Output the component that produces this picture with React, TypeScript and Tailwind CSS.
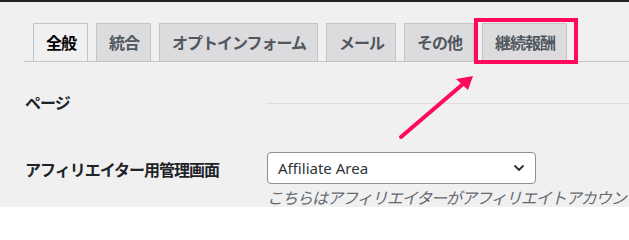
import React from "react";

const tabs = ["全般", "統合", "オプトインフォーム", "メール", "その他", "継続報酬"];

export default function App() {
  return (
    <div
      className="relative w-[629px] h-[207px] overflow-hidden bg-[#f0f0f1]"
      style={{ fontFamily: '"Noto Sans", "Noto Sans CJK JP", sans-serif' }}
    >
      <div className="h-[2px] bg-[#1d2327]" />
      <div className="ml-[24px] pt-[21px] pl-[9px] flex gap-[8px] border-b border-[#c3c4c7]">
        {tabs.map((t, i) => (
          <div
            key={t}
            className={
              i === 0
                ? "h-[38px] -mb-px pl-[12px] pr-[11px] flex items-center border border-b-0 border-[#c3c4c7] bg-[#f0f0f1] text-[16px] tracking-[-1px] font-bold text-[#000] leading-none"
                : "h-[38px] pl-[12px] pr-[11px] flex items-center border border-b-0 border-[#c3c4c7] bg-[#dcdcde] text-[16px] tracking-[-1px] font-bold text-[#50575e] leading-none"
            }
          >
            {t}
          </div>
        ))}
      </div>

      <div className="pl-[25px]">
        <div className="mt-[29px] h-[24px] flex items-center">
          <div className="w-[241px] text-[16px] tracking-[-1px] font-bold text-[#1d2327]">ページ</div>
          <div className="flex-1 h-px bg-[#dcdcde]" />
        </div>
        <div className="mt-[37px] flex items-center">
          <div className="w-[242px] pt-[3px] text-[16px] tracking-[-1px] font-bold text-[#1d2327]">アフィリエイター用管理画面</div>
          <div className="w-[269px] h-[32px] flex items-center justify-between pl-[10px] pr-[11px] border border-[#8c8f94] rounded-[4px] bg-white text-[15px] text-[#2c3338]">
            <span>Affiliate Area</span>
            <svg width="10" height="6" viewBox="0 0 10 6" fill="none">
              <path d="M1 1l4 4 4-4" stroke="#2c3338" strokeWidth="1.8" strokeLinecap="round" strokeLinejoin="round" />
            </svg>
          </div>
        </div>
        <div className="ml-[242px] mt-[2px] whitespace-nowrap text-[16px] tracking-[-1px] italic text-[#646970]">
          こちらはアフィリエイターがアフィリエイトアカウントを管理するページです。
        </div>
      </div>

      <div className="absolute left-[474px] top-[18px] w-[104px] h-[46px] border-[4px] border-[#ff0a5a]" />
      <svg className="absolute left-0 top-0" width="629" height="207" viewBox="0 0 629 207">
        <line x1="401" y1="137" x2="463" y2="84" stroke="#ff0a5a" strokeWidth="4" strokeLinecap="round" />
        <polygon points="473,76 456,79 468,90" fill="#ff0a5a" />
      </svg>
    </div>
  );
}
